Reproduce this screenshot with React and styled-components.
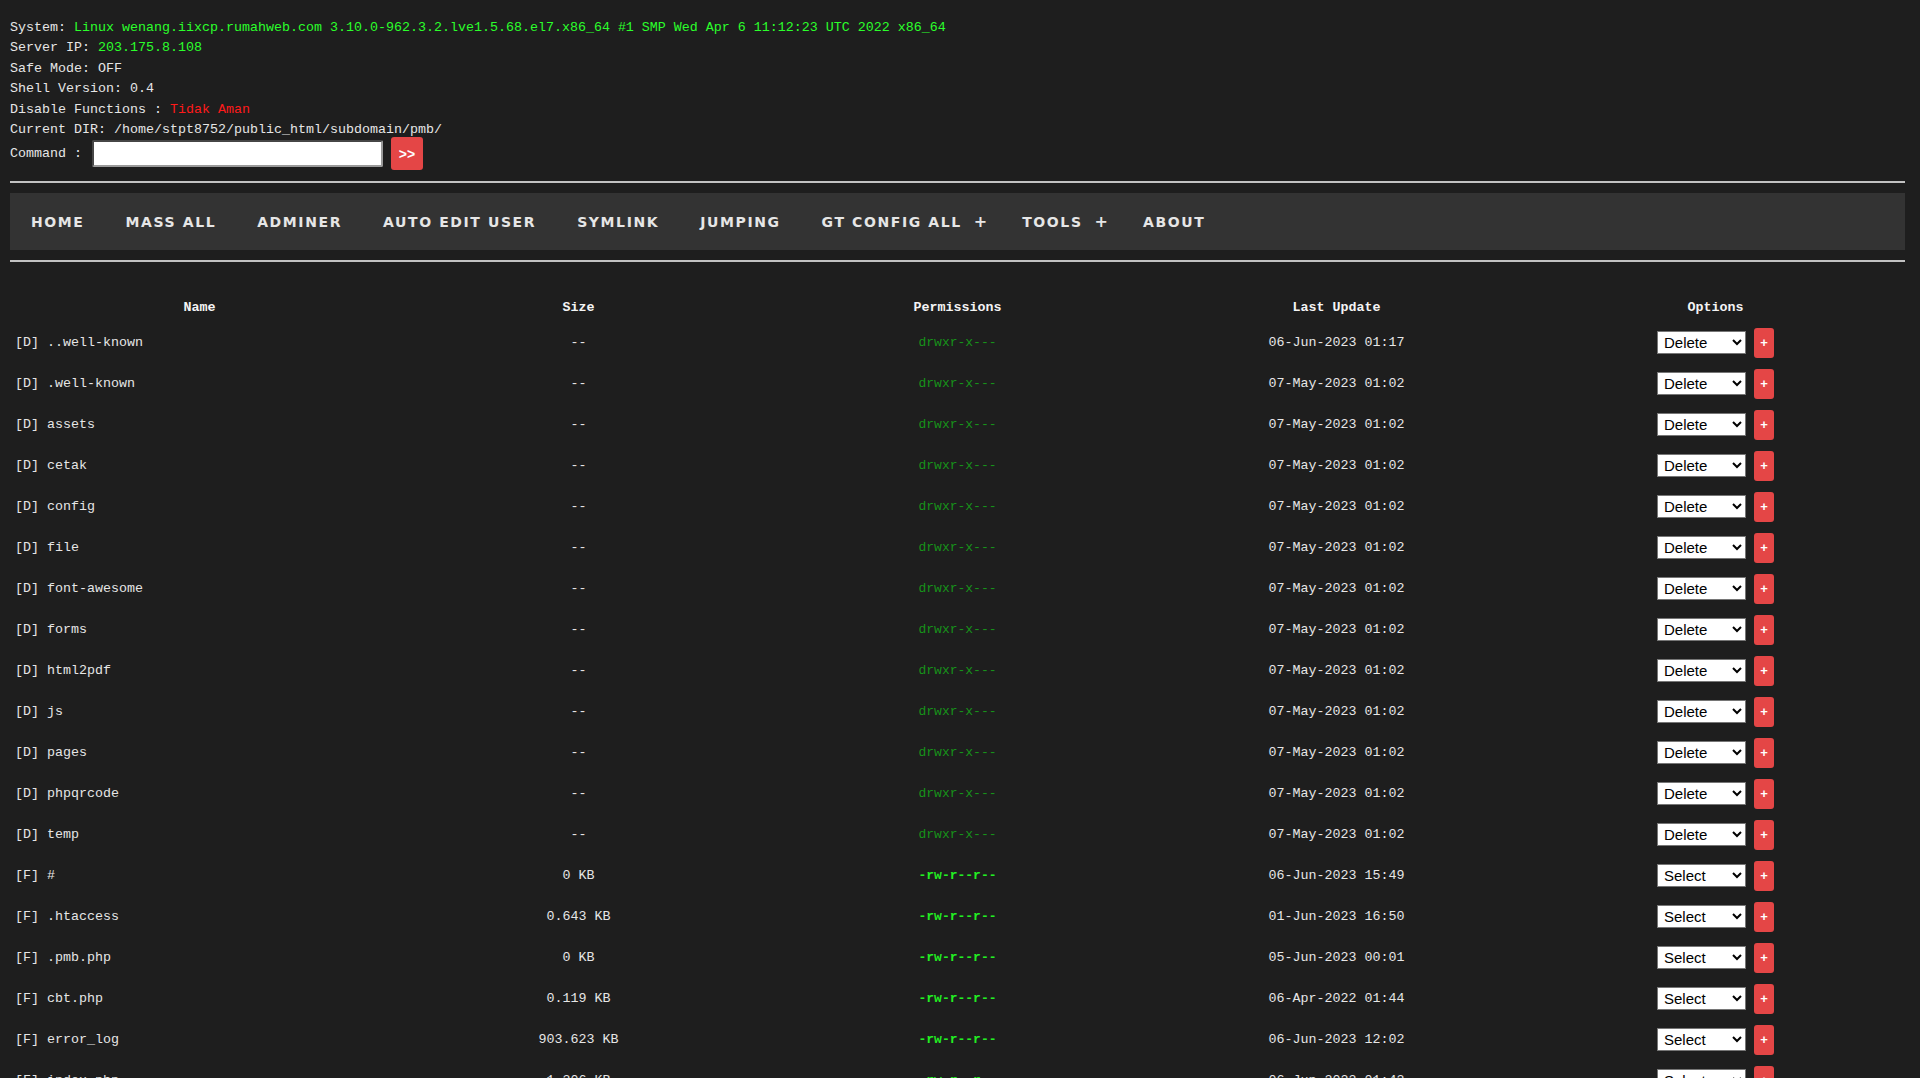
import styled, { createGlobalStyle } from 'styled-components'

const GlobalStyle = createGlobalStyle`
    html, body {
        margin: 0;
        padding: 0;
        background-color: #1e1e1e;
    }
    ::-webkit-scrollbar {
        width: 5px;
    }
    ::-webkit-scrollbar-track {
        background-color: #333;
    }
    ::-webkit-scrollbar-thumb {
        background-color: #fff;
    }
`

const Page = styled.div`
    padding: 18px 15px 10px 10px;
    color: #e6e6e6;
    font-family: "Liberation Mono", "DejaVu Sans Mono", monospace;
    font-size: 13.33px;
`

const InfoLine = styled.div`
    line-height: 20.4px;
    white-space: nowrap;
`

const Value = styled.span`
    color: ${p => (p.$bad ? '#ff1a1a' : '#2bff2b')};
`

const CommandRow = styled.form`
    display: flex;
    align-items: center;
    height: 33px;
    margin-top: -3px;
`

const CommandInput = styled.input`
    width: 291px;
    height: 27px;
    margin-left: 10px;
    box-sizing: border-box;
    border: 2px inset #9a9a9a;
    background-color: #fff;
    border-radius: 2px;
`

const RedButton = styled.button`
    display: flex;
    align-items: center;
    justify-content: center;
    width: ${p => p.$w || 32}px;
    height: ${p => p.$h || 33}px;
    margin-left: ${p => p.$ml || 8}px;
    padding: 0;
    border: none;
    border-radius: 3px;
    background-color: #e44646;
    color: #fff;
    font-family: "Liberation Sans", Arial, sans-serif;
    font-size: ${p => p.$fs || 14}px;
    font-weight: bold;
    cursor: pointer;
`

const Rule = styled.hr`
    height: 2px;
    margin: ${p => p.$m};
    border: none;
    background-color: #c2c2c2;
`

const Nav = styled.nav`
    display: flex;
    align-items: center;
    height: 57px;
    background-color: #333;
`

const NavItem = styled.div`
    display: flex;
    align-items: center;
    height: 100%;
    padding: ${p => (p.$drop ? '0 14px 0 21px' : '0 20px 0 21px')};
    color: #e6e6e6;
    font-family: "DejaVu Sans", "Open Sans", sans-serif;
    font-size: 14px;
    font-weight: 700;
    letter-spacing: 1.6px;
    cursor: pointer;
`

const Plus = styled.span`
    margin-left: 12px;
    font-size: 16px;
    font-weight: 700;
    letter-spacing: 0;
`

const Table = styled.table`
    width: 100%;
    margin-top: 31px;
    table-layout: fixed;
    border-collapse: collapse;
`

const Th = styled.th`
    height: 29px;
    padding: 0 5px;
    color: #f4f4f4;
    font-weight: bold;
    text-align: center;
`

const Td = styled.td`
    height: 41px;
    padding: 0 5px;
    text-align: ${p => (p.$left ? 'left' : 'center')};
    white-space: nowrap;
`

const Perm = styled.span`
    font-family: "Liberation Mono", monospace;
    font-size: 13px;
    color: ${p => (p.$file ? '#22ee22' : '#17921a')};
    font-weight: ${p => (p.$file ? 700 : 400)};
`

const Options = styled.div`
    display: flex;
    align-items: center;
    justify-content: center;
`

const Select = styled.select`
    width: 89px;
    height: 23px;
    padding: 0 2px;
    border: 1px solid #767676;
    border-radius: 0;
    background-color: #fff;
    color: #000;
    font-family: "Liberation Sans", Arial, sans-serif;
    font-size: 15px;
`

const dirs = [
    ['..well-known', '06-Jun-2023 01:17'],
    ['.well-known', '07-May-2023 01:02'],
    ['assets', '07-May-2023 01:02'],
    ['cetak', '07-May-2023 01:02'],
    ['config', '07-May-2023 01:02'],
    ['file', '07-May-2023 01:02'],
    ['font-awesome', '07-May-2023 01:02'],
    ['forms', '07-May-2023 01:02'],
    ['html2pdf', '07-May-2023 01:02'],
    ['js', '07-May-2023 01:02'],
    ['pages', '07-May-2023 01:02'],
    ['phpqrcode', '07-May-2023 01:02'],
    ['temp', '07-May-2023 01:02'],
]

const files = [
    ['#', '0 KB', '06-Jun-2023 15:49'],
    ['.htaccess', '0.643 KB', '01-Jun-2023 16:50'],
    ['.pmb.php', '0 KB', '05-Jun-2023 00:01'],
    ['cbt.php', '0.119 KB', '06-Apr-2022 01:44'],
    ['error_log', '903.623 KB', '06-Jun-2023 12:02'],
    ['index.php', '1.306 KB', '06-Jun-2023 01:43'],
    ['koneksi.php', '0.412 KB', '07-May-2023 01:02'],
    ['login.php', '3.215 KB', '07-May-2023 01:02'],
    ['logout.php', '0.188 KB', '07-May-2023 01:02'],
    ['pendaftaran.php', '12.874 KB', '07-May-2023 01:02'],
    ['proses.php', '4.530 KB', '07-May-2023 01:02'],
    ['robots.txt', '0.024 KB', '07-May-2023 01:02'],
    ['update.php', '2.761 KB', '07-May-2023 01:02'],
]

const menu = [
    { label: 'HOME' },
    { label: 'MASS ALL' },
    { label: 'ADMINER' },
    { label: 'AUTO EDIT USER' },
    { label: 'SYMLINK' },
    { label: 'JUMPING' },
    { label: 'GT CONFIG ALL', drop: true },
    { label: 'TOOLS', drop: true },
    { label: 'ABOUT' },
]

function Row({ type, name, size, perm, date, action }) {
  return (
    <tr>
        <Td $left>[{type}] {name}</Td>
        <Td>{size}</Td>
        <Td><Perm $file={type === 'F'}>{perm}</Perm></Td>
        <Td>{date}</Td>
        <Td>
            <Options>
                <Select defaultValue={action}>
                    <option>{action}</option>
                    <option>Rename</option>
                    <option>Chmod</option>
                </Select>
                <RedButton $w={20} $h={30} $ml={8} $fs={13}>+</RedButton>
            </Options>
        </Td>
    </tr>
  )
}

function App() {
  return (
    <>
        <GlobalStyle />
        <Page>
            <InfoLine>System: <Value>Linux wenang.iixcp.rumahweb.com 3.10.0-962.3.2.lve1.5.68.el7.x86_64 #1 SMP Wed Apr 6 11:12:23 UTC 2022 x86_64</Value></InfoLine>
            <InfoLine>Server IP: <Value>203.175.8.108</Value></InfoLine>
            <InfoLine>Safe Mode: OFF</InfoLine>
            <InfoLine>Shell Version: 0.4</InfoLine>
            <InfoLine>Disable Functions : <Value $bad>Tidak Aman</Value></InfoLine>
            <InfoLine>Current DIR: /home/stpt8752/public_html/subdomain/pmb/</InfoLine>
            <CommandRow onSubmit={e => e.preventDefault()}>
                <span>Command :</span>
                <CommandInput type="text" />
                <RedButton type="submit">&gt;&gt;</RedButton>
            </CommandRow>

            <Rule $m="11px 0 10px" />
            <Nav>
                {menu.map(m => (
                    <NavItem key={m.label} $drop={m.drop}>
                        {m.label}
                        {m.drop && <Plus>+</Plus>}
                    </NavItem>
                ))}
            </Nav>
            <Rule $m="10px 0 0" />

            <Table>
                <thead>
                    <tr>
                        <Th>Name</Th>
                        <Th>Size</Th>
                        <Th>Permissions</Th>
                        <Th>Last Update</Th>
                        <Th>Options</Th>
                    </tr>
                </thead>
                <tbody>
                    {dirs.map(([name, date]) => (
                        <Row key={name} type="D" name={name} size="--" perm="drwxr-x---" date={date} action="Delete" />
                    ))}
                    {files.map(([name, size, date]) => (
                        <Row key={name} type="F" name={name} size={size} perm="-rw-r--r--" date={date} action="Select" />
                    ))}
                </tbody>
            </Table>
        </Page>
    </>
  )
}

export default App
